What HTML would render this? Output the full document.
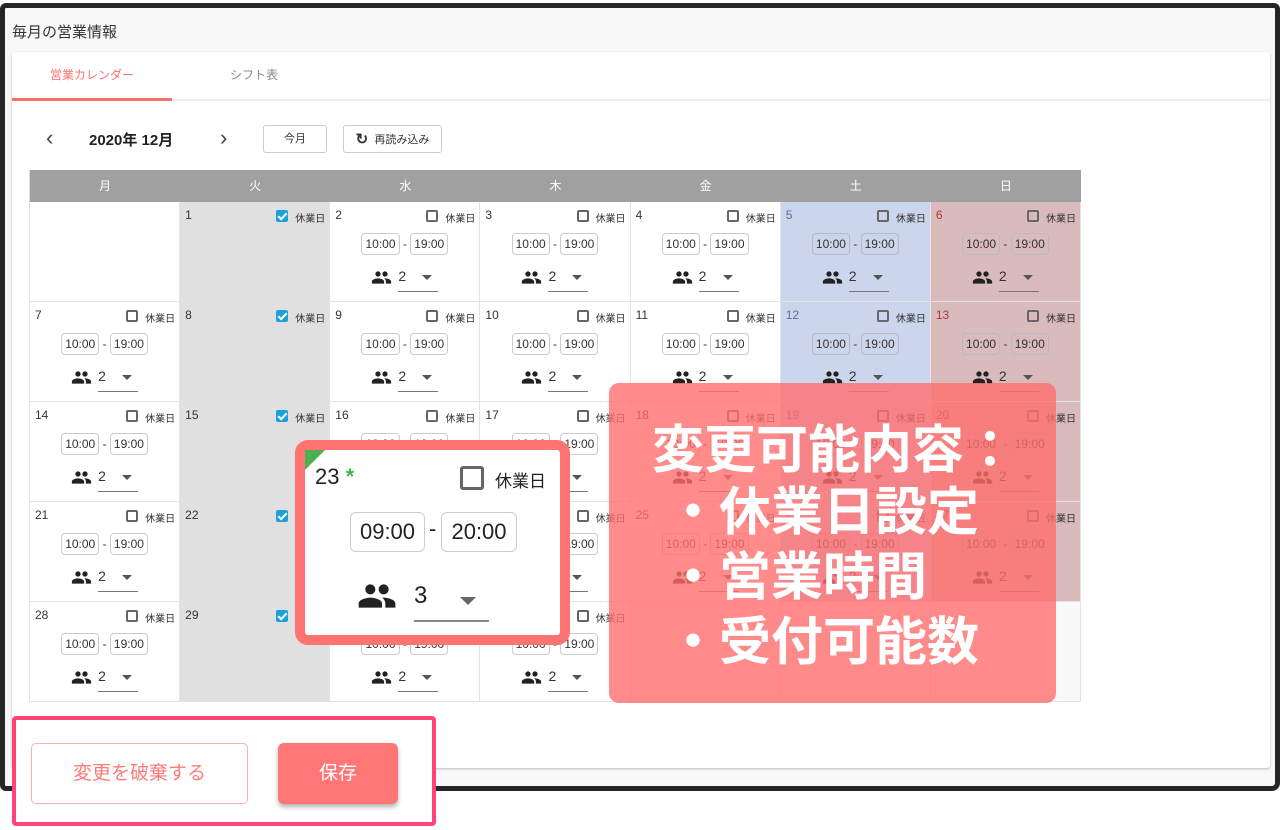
<!DOCTYPE html>
<html><head><meta charset="utf-8"><style>
*{box-sizing:border-box;margin:0;padding:0}
body{width:1280px;height:830px;background:#fff;font-family:"Liberation Sans","Noto Sans CJK JP",sans-serif;position:relative;overflow:hidden;color:#333}
.frame{position:absolute;left:0;top:3px;width:1280px;height:788px;border:5px solid #262626;border-radius:6px 6px 8px 6px;background:#f8f8f8}
.title{position:absolute;left:12px;top:21px;font-size:15px;color:#333}
.card{position:absolute;left:12px;top:52px;width:1258px;height:716px;background:#fff;box-shadow:0 1px 2px rgba(0,0,0,.25);border-radius:3px}
.tabs{position:absolute;left:12px;top:52px;width:1258px;height:49px;border-bottom:2px solid #eee}
.tab1{position:absolute;left:0;top:0;width:160px;height:49px;border-bottom:3px solid #ff6e6e;color:#ff6e6e;font-size:12px;text-align:center;line-height:46px}
.tab2{position:absolute;left:172px;top:0;width:140px;height:49px;color:#888;font-size:12px;text-align:center;line-height:46px}
.nav{position:absolute;top:125px;font-size:22px}
.btn{position:absolute;top:125px;height:28px;border:1px solid #ccc;border-radius:3px;font-size:11px;text-align:center;line-height:26px;color:#333;background:#fff}
.cal{position:absolute;left:29px;top:170px;width:1052px;border-left:1px solid #e3e3e3}
.hd{display:grid;grid-template-columns:repeat(7,1fr);height:32px;background:#a0a0a0;color:#fff;font-size:12px;text-align:center;line-height:32px}
.gr{display:grid;grid-template-columns:repeat(7,1fr)}
.c{position:relative;height:100px;border-right:1px solid #e3e3e3;border-bottom:1px solid #e3e3e3;background:#fff}
.h{background:#e0e0e0}.sa{background:#cbd5eb}.su{background:#dabbbb}.e{background:#f9f9f9}
.d{position:absolute;left:5px;top:6px;font-size:12px;font-style:normal;color:#333}
.sa .d{color:#5b6b9b}.su .d{color:#b03535}
.cb{position:absolute;right:41px;top:8px;width:12px;height:12px;border:2px solid #666;border-radius:2px}
.h .cb{border:none;background:#1ca0dc}
.h .cb:after{content:"";position:absolute;left:4px;top:1px;width:3px;height:7px;border:solid #fff;border-width:0 2px 2px 0;transform:rotate(45deg)}
em{position:absolute;right:4px;top:8px;font-size:10px;font-style:normal;color:#333}
.t{position:absolute;left:0;right:0;top:31px;text-align:center;font-size:12px;color:#333}
.t span{display:inline-block;border:1px solid #ccc;border-radius:4px;padding:3px 3px;background:rgba(255,255,255,.6);line-height:14px}
.sa .t span,.su .t span{background:transparent;border-color:#b8b8c8}
.p{position:absolute;left:0;right:0;top:64px;text-align:center;height:30px}
.p svg{width:21px;height:21px;vertical-align:top;margin-top:1px;margin-right:6px}
.p u{display:inline-block;width:40px;height:26px;border-bottom:1px solid #777;text-decoration:none;text-align:left;font-size:14px;position:relative;padding-top:2px}
.p u s{position:absolute;right:6px;top:9px;border:5px solid transparent;border-top:5px solid #555;border-bottom:0}
.pop{position:absolute;left:295px;top:440px;width:275px;height:205px;border:10px solid #ff7373;border-radius:13px;background:#fff}
.ov{position:absolute;left:609px;top:383px;width:447px;height:320px;background:rgba(255,110,110,.8);border-radius:10px;color:#fff;font-weight:bold;font-size:52px;line-height:64px}
.bb{position:absolute;left:12px;top:716px;width:424px;height:110px;border:4px solid #ff4477;border-radius:4px;background:#fff}
</style></head><body>
<svg width="0" height="0" style="position:absolute"><defs><path id="pp" d="M16 11c1.660 0 2.99-1.34 2.99-3S17.66 5 16 5c-1.66 0-3 1.34-3 3s1.34 3 3 3zm-8 0c1.66 0 2.99-1.34 2.99-3S9.66 5 8 5C6.34 5 5 6.34 5 8s1.34 3 3 3zm0 2c-2.33 0-7 1.17-7 3.5V19h14v-2.5c0-2.33-4.670-3.5-7-3.5zm8 0c-.29 0-.62.02-.97.05 1.16.84 1.97 1.97 1.97 3.45V19h6v-2.5c0-2.33-4.67-3.5-7-3.5z" fill="#222"/></defs></svg>
<div class="frame"></div>
<div class="title">毎月の営業情報</div>
<div class="card"></div>
<div class="tabs"><div class="tab1">営業カレンダー</div><div class="tab2">シフト表</div></div>
<div class="nav" style="left:46px;color:#444">‹</div>
<div class="nav" style="left:89px;font-weight:bold;font-size:15px;top:129px;color:#222">2020年 12月</div>
<div class="nav" style="left:220px;color:#444">›</div>
<div class="btn" style="left:263px;width:64px">今月</div>
<div class="btn" style="left:343px;width:99px"><span style="font-size:15px;font-weight:bold;position:relative;top:1px">↻</span>&nbsp; 再読み込み</div>

<div class="cal">
<div class="hd"><div>月</div><div>火</div><div>水</div><div>木</div><div>金</div><div>土</div><div>日</div></div>
<div class="gr">
<div class="c"></div>
<div class="c h"><i class="d">1</i><b class="cb"></b><em>休業日</em></div>
<div class="c"><i class="d">2</i><b class="cb"></b><em>休業日</em><div class="t"><span>10:00</span> - <span>19:00</span></div><div class="p"><svg viewBox="0 0 24 24"><use href="#pp"/></svg><u>2<s></s></u></div></div>
<div class="c"><i class="d">3</i><b class="cb"></b><em>休業日</em><div class="t"><span>10:00</span> - <span>19:00</span></div><div class="p"><svg viewBox="0 0 24 24"><use href="#pp"/></svg><u>2<s></s></u></div></div>
<div class="c"><i class="d">4</i><b class="cb"></b><em>休業日</em><div class="t"><span>10:00</span> - <span>19:00</span></div><div class="p"><svg viewBox="0 0 24 24"><use href="#pp"/></svg><u>2<s></s></u></div></div>
<div class="c sa"><i class="d">5</i><b class="cb"></b><em>休業日</em><div class="t"><span>10:00</span> - <span>19:00</span></div><div class="p"><svg viewBox="0 0 24 24"><use href="#pp"/></svg><u>2<s></s></u></div></div>
<div class="c su"><i class="d">6</i><b class="cb"></b><em>休業日</em><div class="t"><span>10:00</span> - <span>19:00</span></div><div class="p"><svg viewBox="0 0 24 24"><use href="#pp"/></svg><u>2<s></s></u></div></div>

<div class="c"><i class="d">7</i><b class="cb"></b><em>休業日</em><div class="t"><span>10:00</span> - <span>19:00</span></div><div class="p"><svg viewBox="0 0 24 24"><use href="#pp"/></svg><u>2<s></s></u></div></div>
<div class="c h"><i class="d">8</i><b class="cb"></b><em>休業日</em></div>
<div class="c"><i class="d">9</i><b class="cb"></b><em>休業日</em><div class="t"><span>10:00</span> - <span>19:00</span></div><div class="p"><svg viewBox="0 0 24 24"><use href="#pp"/></svg><u>2<s></s></u></div></div>
<div class="c"><i class="d">10</i><b class="cb"></b><em>休業日</em><div class="t"><span>10:00</span> - <span>19:00</span></div><div class="p"><svg viewBox="0 0 24 24"><use href="#pp"/></svg><u>2<s></s></u></div></div>
<div class="c"><i class="d">11</i><b class="cb"></b><em>休業日</em><div class="t"><span>10:00</span> - <span>19:00</span></div><div class="p"><svg viewBox="0 0 24 24"><use href="#pp"/></svg><u>2<s></s></u></div></div>
<div class="c sa"><i class="d">12</i><b class="cb"></b><em>休業日</em><div class="t"><span>10:00</span> - <span>19:00</span></div><div class="p"><svg viewBox="0 0 24 24"><use href="#pp"/></svg><u>2<s></s></u></div></div>
<div class="c su"><i class="d">13</i><b class="cb"></b><em>休業日</em><div class="t"><span>10:00</span> - <span>19:00</span></div><div class="p"><svg viewBox="0 0 24 24"><use href="#pp"/></svg><u>2<s></s></u></div></div>

<div class="c"><i class="d">14</i><b class="cb"></b><em>休業日</em><div class="t"><span>10:00</span> - <span>19:00</span></div><div class="p"><svg viewBox="0 0 24 24"><use href="#pp"/></svg><u>2<s></s></u></div></div>
<div class="c h"><i class="d">15</i><b class="cb"></b><em>休業日</em></div>
<div class="c"><i class="d">16</i><b class="cb"></b><em>休業日</em><div class="t"><span>10:00</span> - <span>19:00</span></div><div class="p"><svg viewBox="0 0 24 24"><use href="#pp"/></svg><u>2<s></s></u></div></div>
<div class="c"><i class="d">17</i><b class="cb"></b><em>休業日</em><div class="t"><span>10:00</span> - <span>19:00</span></div><div class="p"><svg viewBox="0 0 24 24"><use href="#pp"/></svg><u>2<s></s></u></div></div>
<div class="c"><i class="d">18</i><b class="cb"></b><em>休業日</em><div class="t"><span>10:00</span> - <span>19:00</span></div><div class="p"><svg viewBox="0 0 24 24"><use href="#pp"/></svg><u>2<s></s></u></div></div>
<div class="c sa"><i class="d">19</i><b class="cb"></b><em>休業日</em><div class="t"><span>10:00</span> - <span>19:00</span></div><div class="p"><svg viewBox="0 0 24 24"><use href="#pp"/></svg><u>2<s></s></u></div></div>
<div class="c su"><i class="d">20</i><b class="cb"></b><em>休業日</em><div class="t"><span>10:00</span> - <span>19:00</span></div><div class="p"><svg viewBox="0 0 24 24"><use href="#pp"/></svg><u>2<s></s></u></div></div>

<div class="c"><i class="d">21</i><b class="cb"></b><em>休業日</em><div class="t"><span>10:00</span> - <span>19:00</span></div><div class="p"><svg viewBox="0 0 24 24"><use href="#pp"/></svg><u>2<s></s></u></div></div>
<div class="c h"><i class="d">22</i><b class="cb"></b><em>休業日</em></div>
<div class="c"><i class="d">23</i><b class="cb"></b><em>休業日</em><div class="t"><span>09:00</span> - <span>20:00</span></div><div class="p"><svg viewBox="0 0 24 24"><use href="#pp"/></svg><u>3<s></s></u></div></div>
<div class="c"><i class="d">24</i><b class="cb"></b><em>休業日</em><div class="t"><span>10:00</span> - <span>19:00</span></div><div class="p"><svg viewBox="0 0 24 24"><use href="#pp"/></svg><u>2<s></s></u></div></div>
<div class="c"><i class="d">25</i><b class="cb"></b><em>休業日</em><div class="t"><span>10:00</span> - <span>19:00</span></div><div class="p"><svg viewBox="0 0 24 24"><use href="#pp"/></svg><u>2<s></s></u></div></div>
<div class="c sa"><i class="d">26</i><b class="cb"></b><em>休業日</em><div class="t"><span>10:00</span> - <span>19:00</span></div><div class="p"><svg viewBox="0 0 24 24"><use href="#pp"/></svg><u>2<s></s></u></div></div>
<div class="c su"><i class="d">27</i><b class="cb"></b><em>休業日</em><div class="t"><span>10:00</span> - <span>19:00</span></div><div class="p"><svg viewBox="0 0 24 24"><use href="#pp"/></svg><u>2<s></s></u></div></div>

<div class="c"><i class="d">28</i><b class="cb"></b><em>休業日</em><div class="t"><span>10:00</span> - <span>19:00</span></div><div class="p"><svg viewBox="0 0 24 24"><use href="#pp"/></svg><u>2<s></s></u></div></div>
<div class="c h"><i class="d">29</i><b class="cb"></b><em>休業日</em></div>
<div class="c"><i class="d">30</i><b class="cb"></b><em>休業日</em><div class="t"><span>10:00</span> - <span>19:00</span></div><div class="p"><svg viewBox="0 0 24 24"><use href="#pp"/></svg><u>2<s></s></u></div></div>
<div class="c"><i class="d">31</i><b class="cb"></b><em>休業日</em><div class="t"><span>10:00</span> - <span>19:00</span></div><div class="p"><svg viewBox="0 0 24 24"><use href="#pp"/></svg><u>2<s></s></u></div></div>
<div class="c e"></div><div class="c e"></div><div class="c e"></div>
</div></div>

<div class="pop">
<div style="position:absolute;left:0;top:0;width:0;height:0;border-top:20px solid #4caf50;border-right:20px solid transparent"></div>
<div style="position:absolute;left:10px;top:14px;font-size:22px;color:#222">23 <span style="color:#4caf50;font-weight:bold">*</span></div>
<div style="position:absolute;left:155px;top:16px;width:24px;height:24px;border:3px solid #666;border-radius:3px"></div>
<div style="position:absolute;left:190px;top:17px;font-size:17px;color:#222">休業日</div>
<div style="position:absolute;left:45px;top:62px;width:75px;height:40px;border:1px solid #ccc;border-radius:6px;font-size:22px;text-align:center;line-height:38px;color:#222">09:00</div>
<div style="position:absolute;left:124px;top:66px;font-size:22px;color:#222">-</div>
<div style="position:absolute;left:136px;top:62px;width:76px;height:40px;border:1px solid #ccc;border-radius:6px;font-size:22px;text-align:center;line-height:38px;color:#222">20:00</div>
<svg viewBox="0 0 24 24" style="position:absolute;left:52px;top:126px;width:40px;height:40px"><use href="#pp"/></svg>
<div style="position:absolute;left:109px;top:132px;width:75px;height:40px;border-bottom:2px solid #888;font-size:24px;color:#222">3</div>
<div style="position:absolute;left:155px;top:147px;border:8px solid transparent;border-top:8px solid #666;border-bottom:0"></div>
</div>

<div class="ov">
<div style="position:absolute;left:43px;top:36px">変更可能内容：</div>
<div style="position:absolute;left:58px;top:98px">・休業日設定</div>
<div style="position:absolute;left:58px;top:163px">・営業時間</div>
<div style="position:absolute;left:58px;top:228px">・受付可能数</div>
</div>

<div class="bb">
<div style="position:absolute;left:15px;top:23px;width:217px;height:61px;border:1px solid #ffb0b0;border-radius:5px;color:#ff7a7a;font-size:19px;text-align:center;line-height:59px">変更を破棄する</div>
<div style="position:absolute;left:262px;top:23px;width:120px;height:61px;background:#ff7676;border-radius:6px;color:#fff;font-size:19px;text-align:center;line-height:61px;box-shadow:0 3px 5px rgba(0,0,0,.3)">保存</div>
</div>
</body></html>
